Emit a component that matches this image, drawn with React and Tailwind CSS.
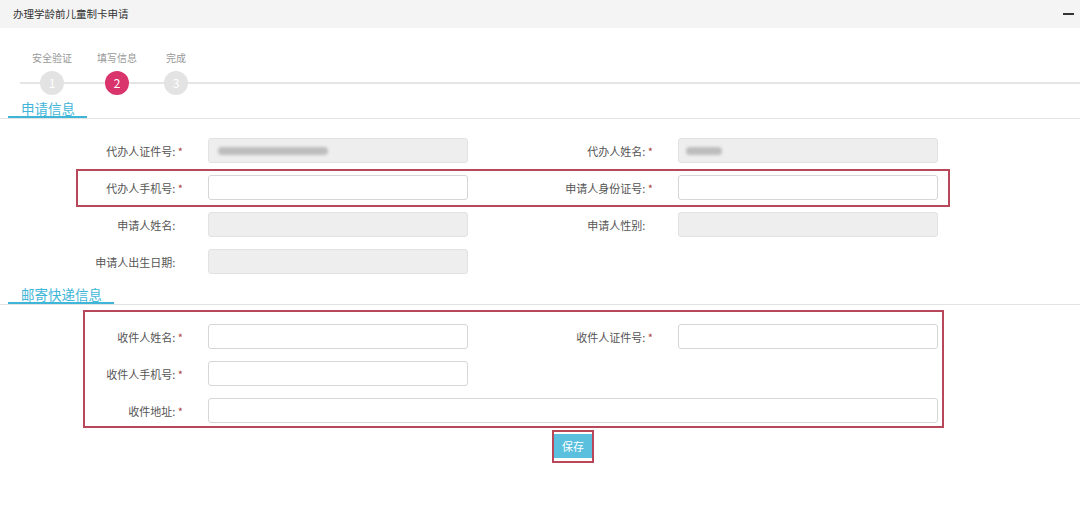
import { useState } from "react";

function Field({ label, required, disabled, blurW, blurL = 9, wide }) {
  return (
    <div className={"flex items-center " + (wide ? "w-[940px]" : "w-[470px]")}>
      <label className="w-[183px] shrink-0 text-right text-[11px] leading-[14px] text-[#555]">
        {label}:{" "}
        {required ? <span className="text-[#a94442]">*</span> : <span className="invisible">*</span>}
      </label>
      <div
        className={
          "ml-[25px] flex h-[25px] shrink-0 items-center rounded-[3px] border " +
          (wide ? "w-[730px] " : "w-[260px] ") +
          (disabled ? "border-[#e2e2e2] bg-[#eeeeee]" : "border-[#d6d6d6] bg-white")
        }
      >
        {blurW ? (
          <div
            className="h-[8px] rounded-sm bg-[#bdbdbd] blur-[1.5px]"
            style={{ width: blurW, marginLeft: blurL }}
          />
        ) : null}
      </div>
    </div>
  );
}

function SectionTitle({ children }) {
  return (
    <div className="flex border-b border-[#e3e3e3]">
      <div className="ml-[8px] border-b-2 border-[#3fb5d8] pl-[13px] pr-[12px] text-[13.5px] leading-[16px] text-[#3fb5d8]">
        {children}
      </div>
    </div>
  );
}

function Step({ n, active }) {
  return (
    <div
      className={
        "flex h-[24px] w-[24px] shrink-0 items-center justify-center rounded-full text-[12px] text-white " +
        (active ? "bg-[#d9346b]" : "bg-[#e3e3e3]")
      }
    >
      {n}
    </div>
  );
}

export default function App() {
  const [current] = useState(2);

  return (
    <div className="min-h-[505px] w-[1080px] bg-white font-['Noto_Sans_CJK_SC',sans-serif]">
      {/* header */}
      <div className="flex h-[28px] items-center justify-between bg-[#f4f4f4] pl-[13px] pr-[6px]">
        <span className="text-[10.5px] text-[#333]">办理学龄前儿童制卡申请</span>
        <div className="h-[2px] w-[11px] bg-[#333]" />
      </div>

      {/* steps */}
      <div className="mt-[23px] flex pl-[28px] text-[10px] leading-[14px] text-[#999]">
        <span className="w-[48px] text-center">安全验证</span>
        <span className="ml-[17px] w-[48px] text-center">填写信息</span>
        <span className="ml-[11px] w-[48px] text-center">完成</span>
      </div>
      <div className="mt-[6px] flex items-center pl-[20px]">
        <div className="h-[2px] w-[20px] bg-[#e5e5e5]" />
        <Step n={1} active={current === 1} />
        <div className="h-[2px] w-[41px] bg-[#e5e5e5]" />
        <Step n={2} active={current === 2} />
        <div className="h-[2px] w-[35px] bg-[#e5e5e5]" />
        <Step n={3} active={current === 3} />
        <div className="h-[2px] flex-1 bg-[#e5e5e5]" />
      </div>

      {/* 申请信息 */}
      <div className="mt-[5px]">
        <SectionTitle>申请信息</SectionTitle>
      </div>
      <div className="mt-[19px] flex flex-col gap-[12px]">
        <div className="flex">
          <Field label="代办人证件号" required disabled blurW={110} />
          <Field label="代办人姓名" required disabled blurW={36} blurL={7} />
        </div>
        <div className="relative flex">
          <Field label="代办人手机号" required />
          <Field label="申请人身份证号" required />
          <div className="absolute -top-[6px] -bottom-[7px] left-[76px] w-[874px] border-2 border-[#b9475a]" />
        </div>
        <div className="flex">
          <Field label="申请人姓名" disabled />
          <Field label="申请人性别" disabled />
        </div>
        <div className="flex">
          <Field label="申请人出生日期" disabled />
        </div>
      </div>

      {/* 邮寄快递信息 */}
      <div className="mt-[12px]">
        <SectionTitle>邮寄快递信息</SectionTitle>
      </div>
      <div className="relative mt-[19px] flex flex-col gap-[12px]">
        <div className="flex">
          <Field label="收件人姓名" required />
          <Field label="收件人证件号" required />
        </div>
        <div className="flex">
          <Field label="收件人手机号" required />
        </div>
        <div className="flex">
          <Field label="收件地址" required wide />
        </div>
        <div className="absolute -top-[14px] -bottom-[5px] left-[83px] w-[861px] border-2 border-[#b9475a]" />
      </div>

      <div className="relative ml-[553px] mt-[9px] w-[40px]">
        <button className="h-[24px] w-[40px] bg-[#5bc0de] text-[11px] text-white">保存</button>
        <div className="absolute -top-[2px] -left-[1px] -right-[1px] -bottom-[5px] border-2 border-[#b9475a]" />
      </div>
    </div>
  );
}
